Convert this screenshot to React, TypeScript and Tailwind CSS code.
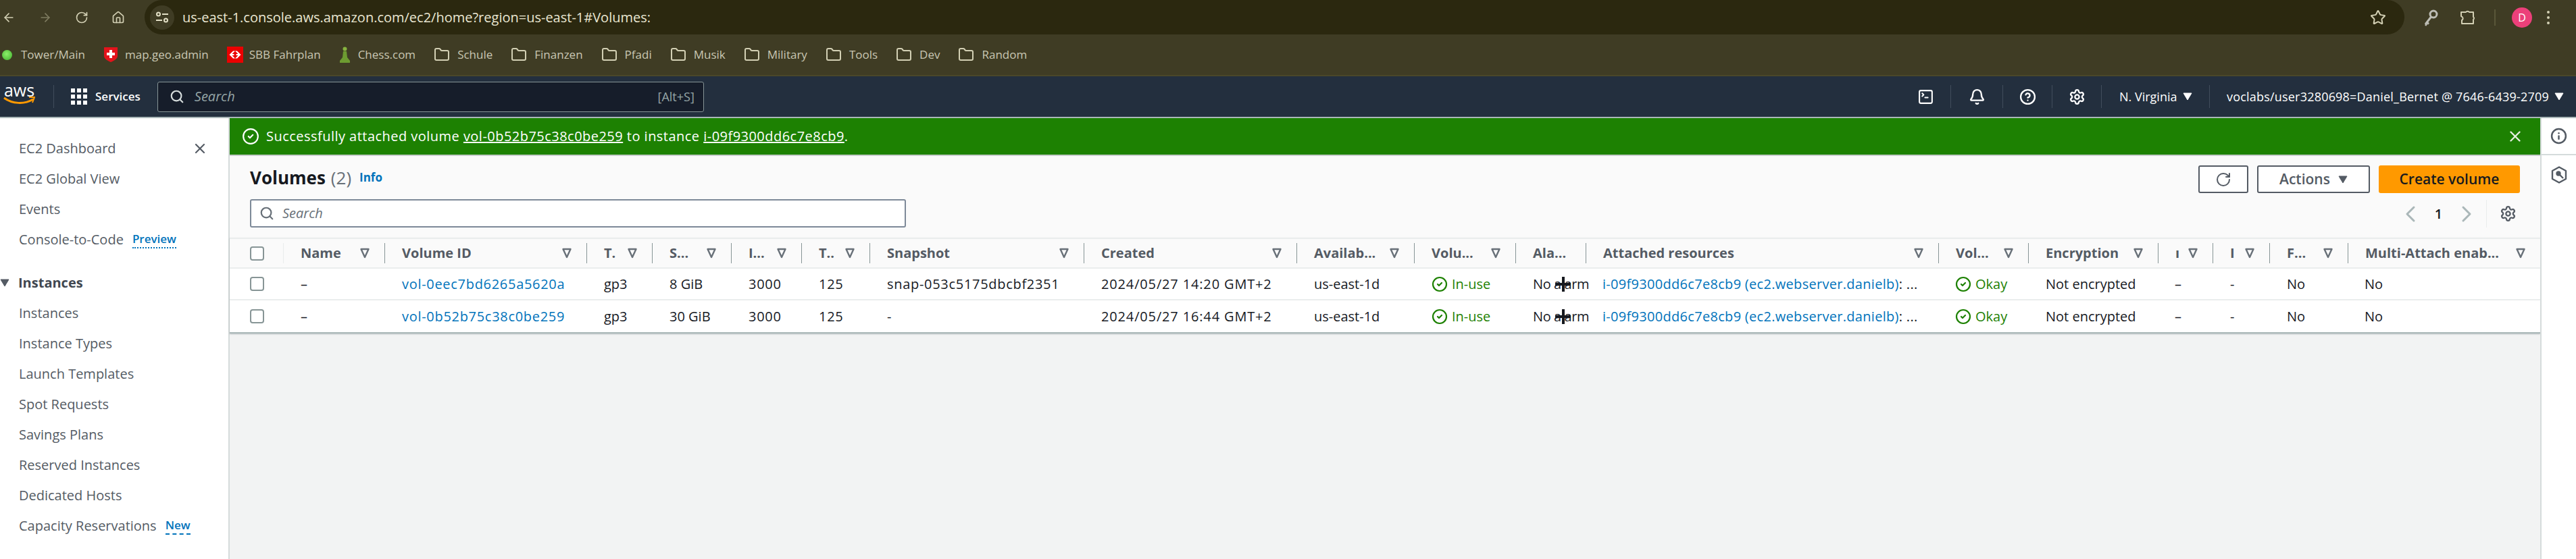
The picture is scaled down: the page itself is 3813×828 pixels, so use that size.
import {
  ArrowLeft,
  ArrowRight,
  Bell,
  ChevronLeft,
  ChevronRight,
  CircleCheck,
  CircleHelp,
  Folder,
  House,
  Info,
  RotateCw,
  Search,
  Settings,
  SquareTerminal,
  Star,
  X,
} from "lucide-react";

const columns = [
  { label: "Name", value: "Name" },
  { label: "Volume ID", value: "Volume ID" },
  { label: "T.", value: "T" },
  { label: "S...", value: "S" },
  { label: "I...", value: "I" },
  { label: "T..", value: "T2" },
  { label: "Snapshot", value: "Snapshot" },
  { label: "Created", value: "Created" },
  { label: "Availab...", value: "Availab" },
  { label: "Volu...", value: "Volu" },
  { label: "Ala...", value: "Ala", noFilter: true },
  { label: "Attached resources", value: "Attached" },
  { label: "Vol...", value: "Vol" },
  { label: "Encryption", value: "Encryption" },
  { label: "ı", value: "K" },
  { label: "I", value: "P" },
  { label: "F...", value: "F" },
  { label: "Multi-Attach enab...", value: "Multi" },
];

const rows = [
  { id: "vol-0eec7bd6265a5620a", size: "8 GiB", snapshot: "snap-053c5175dbcbf2351", created: "2024/05/27 14:20 GMT+2" },
  { id: "vol-0b52b75c38c0be259", size: "30 GiB", snapshot: "-", created: "2024/05/27 16:44 GMT+2" },
];

const bookmarkFolders = ["Schule", "Finanzen", "Pfadi", "Musik", "Military", "Tools", "Dev", "Random"];

const sideTop = ["EC2 Dashboard", "EC2 Global View", "Events"];
const sideInstances = [
  "Instances",
  "Instance Types",
  "Launch Templates",
  "Spot Requests",
  "Savings Plans",
  "Reserved Instances",
  "Dedicated Hosts",
];

function FilterCaret() {
  return (
    <svg width="14" height="16" viewBox="0 0 14 16" className="shrink-0 text-[#687078]">
      <path d="M1.5 2h11L7 14z" fill="none" stroke="currentColor" strokeWidth="2.4" strokeLinejoin="round" />
    </svg>
  );
}

function SolidCaret({ className }: { className: string }) {
  return (
    <svg width="14" height="12" viewBox="0 0 14 12" className={className}>
      <path d="M1 1h12L7 11z" fill="currentColor" stroke="currentColor" strokeLinejoin="round" />
    </svg>
  );
}

function Checkbox() {
  return <div className="h-[21px] w-[21px] rounded-[4px] border-2 border-[#879596] bg-white" />;
}

function StatusOk({ label }: { label: string }) {
  return (
    <span className="flex items-center gap-[6px] text-[#1d8102]">
      <CircleCheck className="h-[24px] w-[24px] shrink-0" strokeWidth={2.2} />
      {label}
    </span>
  );
}

function CursorCross() {
  return (
    <span className="absolute left-[58px] top-1/2 h-[22px] w-[23px] -translate-y-1/2">
      <span className="absolute left-0 top-[9px] h-[4px] w-[23px] bg-[#16191f]" />
      <span className="absolute left-[10px] top-0 h-[22px] w-[4px] bg-[#16191f]" />
    </span>
  );
}

function BrowserChrome() {
  return (
    <div className="h-[113px] shrink-0 border-b-2 border-[#4a4729] bg-[#3f3c24]">
      <div className="flex h-[51px] items-center">
        <div className="flex items-center gap-[34px] pl-[3px] text-[#d3d0b4]">
          <ArrowLeft className="h-[20px] w-[20px]" strokeWidth={2} />
          <ArrowRight className="h-[20px] w-[20px] text-[#7f7c60]" strokeWidth={2} />
          <RotateCw className="h-[20px] w-[20px]" strokeWidth={2} />
          <House className="h-[20px] w-[20px]" strokeWidth={2} />
        </div>
        <div className="ml-[29px] flex h-[51px] w-[3345px] items-center rounded-[26px] bg-[#2b280f] pl-[8px] pr-[27px]">
          <div className="flex h-[36px] w-[36px] items-center justify-center rounded-full bg-[#3f3c24]">
            <svg width="20" height="18" viewBox="0 0 20 18" fill="none" stroke="#e3e0c6" strokeWidth="2">
              <circle cx="4.5" cy="4" r="2.5" />
              <path d="M10 4h9M1 13h9" />
              <circle cx="15.5" cy="13" r="2.5" />
            </svg>
          </div>
          <span className="ml-[12px] text-[20px] text-[#e9e6d2]">us-east-1.console.aws.amazon.com/ec2/home?region=us-east-1#Volumes:</span>
          <Star className="ml-auto h-[24px] w-[24px] text-[#d3d0b4]" strokeWidth={2} />
        </div>
        <svg width="24" height="26" viewBox="0 0 24 26" fill="none" stroke="#bdbdb5" strokeWidth="3" className="ml-[27px]">
          <circle cx="16" cy="8" r="5" />
          <path d="M12.500 12 4 23M6 20l3 2.500M4 23l2 1.500" />
        </svg>
        <svg width="24" height="24" viewBox="0 0 24 24" fill="none" stroke="#d3d0b4" strokeWidth="2" strokeLinejoin="round" className="ml-[31px]">
          <path d="M2 4h7a3 3 0 0 1 5 0h6v7a2.500 2.500 0 0 1 0 4v6H3v-5a3 3 0 0 0 1-4.500 4 4 0 0 0-2-1.500z" />
        </svg>
        <div className="ml-[27px] h-[24px] w-[2px] bg-[#5a5739]" />
        <div className="ml-[24px] flex h-[30px] w-[30px] items-center justify-center rounded-full bg-[#ec407a] text-[16px] text-white">D</div>
        <div className="ml-[22px] flex flex-col gap-[4px]">
          <span className="h-[4px] w-[4px] rounded-full bg-[#d3d0b4]" />
          <span className="h-[4px] w-[4px] rounded-full bg-[#d3d0b4]" />
          <span className="h-[4px] w-[4px] rounded-full bg-[#d3d0b4]" />
        </div>
      </div>
      <div className="flex h-[60px] items-center gap-[27px] pl-[3px] text-[17px] text-[#c9c7b3]">
        <div className="flex items-center gap-[13px]">
          <span className="h-[15px] w-[15px] rounded-full bg-[radial-gradient(circle_at_45%_40%,#8cf06a,#3fae2a)]" />
          Tower/Main
        </div>
        <div className="flex items-center gap-[10px]">
          <svg width="22" height="24" viewBox="0 0 22 24">
            <path d="M1 1h20v13c0 4-5 7-10 9C6 21 1 18 1 14z" fill="#e3131b" />
            <path d="M9 5h4v4h4v4h-4v4H9v-4H5V9h4z" fill="#fff" />
          </svg>
          map.geo.admin
        </div>
        <div className="flex items-center gap-[9px]">
          <svg width="24" height="24" viewBox="0 0 24 24">
            <rect width="24" height="24" fill="#eb0000" />
            <path d="M9 6.500 3.500 12 9 17.500h3L7.500 13h3v-2h-3L12 6.500zM15 6.500 20.500 12 15 17.500h-3l4.500-4.500h-3v-2h3L12 6.500z" fill="#fff" />
          </svg>
          SBB Fahrplan
        </div>
        <div className="flex items-center gap-[11px]">
          <svg width="17" height="24" viewBox="0 0 17 24">
            <circle cx="8.500" cy="3.500" r="3" fill="#86b33f" />
            <path d="M6 7h5l1 9 4 5v3H1v-3l4-5z" fill="#6d9b31" />
          </svg>
          Chess.com
        </div>
        {bookmarkFolders.map((name) => (
          <div key={name} className="flex items-center gap-[11px]">
            <Folder className="h-[24px] w-[24px] text-[#d3d0b4]" strokeWidth={2} />
            {name}
          </div>
        ))}
      </div>
    </div>
  );
}

function ConsoleHeader() {
  return (
    <div className="flex h-[62px] shrink-0 items-center border-b-2 border-[#aab7b8] bg-[#232f3e] text-white">
      <div className="flex h-[34px] w-[80px] flex-col items-center border-r border-[#414d5c] pr-[22px] pt-0 leading-none">
        <span className="-mt-[6px] text-[25px] leading-[26px]">aws</span>
        <svg width="47" height="12" viewBox="0 0 47 12" className="-mt-[3px]" fill="none">
          <path d="M1 2c12 9 30 10 43 2" stroke="#ff9900" strokeWidth="3" />
          <path d="M38 1h8l-3 8" stroke="#ff9900" strokeWidth="2" />
        </svg>
      </div>
      <div className="ml-[25px] grid grid-cols-3 gap-[3px]">
        {Array.from({ length: 9 }).map((_, index) => (
          <span key={index} className="h-[6px] w-[6px] bg-white" />
        ))}
      </div>
      <span className="ml-[12px] text-[17px] font-semibold">Services</span>
      <div className="ml-[25px] flex h-[45px] w-[809px] items-center rounded-[3px] border border-[#879596] bg-[#161d2a] pl-[17px] pr-[13px]">
        <Search className="h-[22px] w-[22px] text-[#d5dbdb]" strokeWidth={2.4} />
        <span className="ml-[15px] text-[20px] italic text-[#95a5a6]">Search</span>
        <span className="ml-auto text-[18px] text-[#95a5a6]">[Alt+S]</span>
      </div>
      <div className="ml-auto flex items-center text-[18px]">
        <div className="flex h-[34px] w-[74px] items-center justify-center border-r border-[#414d5c]">
          <SquareTerminal className="h-[25px] w-[25px]" strokeWidth={2} />
        </div>
        <div className="flex h-[34px] w-[77px] items-center justify-center border-r border-[#414d5c]">
          <Bell className="h-[25px] w-[25px]" strokeWidth={2.2} />
        </div>
        <div className="flex h-[34px] w-[73px] items-center justify-center border-r border-[#414d5c]">
          <CircleHelp className="h-[25px] w-[25px]" strokeWidth={2.2} />
        </div>
        <div className="flex h-[34px] w-[73px] items-center justify-center border-r border-[#414d5c]">
          <Settings className="h-[25px] w-[25px]" strokeWidth={2.2} />
        </div>
        <div className="flex h-[34px] w-[160px] items-center gap-[8px] border-r border-[#414d5c] pl-[26px]">
          N. Virginia
          <SolidCaret className="text-white" />
        </div>
        <div className="flex h-[34px] w-[542px] items-center gap-[8px] whitespace-nowrap pl-[25px] tracking-[0.2px]">
          voclabs/user3280698=Daniel_Bernet @ 7646-6439-2709
          <SolidCaret className="text-white" />
        </div>
      </div>
    </div>
  );
}

function Sidebar() {
  return (
    <aside className="w-[340px] shrink-0 border-r-2 border-[#d5dbdb] bg-white pt-[22px] text-[20px] text-[#545b64]">
      <div className="relative">
        <X className="absolute left-[284px] top-[11px] h-[24px] w-[24px] text-[#545b64]" strokeWidth={2.2} />
        {sideTop.map((item) => (
          <div key={item} className="flex h-[45px] items-center pl-[28px]">
            {item}
          </div>
        ))}
        <div className="flex h-[45px] items-center pl-[28px]">
          Console-to-Code
          <span className="ml-[13px] border-b-2 border-dotted border-[#0073bb] text-[17px] font-semibold leading-[25px] text-[#0073bb]">Preview</span>
        </div>
      </div>
      <div className="mt-[19px] flex h-[45px] items-center gap-[13px] font-bold text-[#414750]">
        <SolidCaret className="text-[#545b64]" />
        Instances
      </div>
      {sideInstances.map((item) => (
        <div key={item} className="flex h-[45px] items-center pl-[28px]">
          {item}
        </div>
      ))}
      <div className="flex h-[45px] items-center pl-[28px]">
        Capacity Reservations
        <span className="ml-[13px] border-b-2 border-dashed border-[#0073bb] text-[17px] font-semibold leading-[25px] text-[#0073bb]">New</span>
      </div>
    </aside>
  );
}

function VolumesHeader() {
  return (
    <div className="flex justify-between bg-[#fafafa] pb-[15px] pl-[30px] pr-[30px] pt-[12px]">
      <div>
        <div className="flex h-[40px] items-center">
          <h1 className="text-[26px] font-bold text-[#16191f]">Volumes</h1>
          <span className="ml-[8px] text-[26px] text-[#687078]">(2)</span>
          <span className="ml-[12px] text-[17px] font-bold text-[#0073bb]">Info</span>
        </div>
        <div className="mt-[12px] flex h-[42px] w-[971px] items-center rounded-[3px] border-2 border-[#7d8998] bg-white pl-[12px]">
          <Search className="h-[22px] w-[22px] text-[#687078]" strokeWidth={2.4} />
          <span className="ml-[12px] text-[20px] italic text-[#687078]">Search</span>
        </div>
      </div>
      <div className="flex flex-col items-end">
        <div className="mt-[2px] flex h-[41px] items-stretch gap-[13px]">
          <div className="flex w-[74px] items-center justify-center rounded-[3px] border-2 border-[#545b64] bg-white text-[#545b64]">
            <RotateCw className="h-[24px] w-[24px]" strokeWidth={2} />
          </div>
          <div className="flex w-[167px] items-center justify-center gap-[12px] rounded-[3px] border-2 border-[#545b64] bg-white text-[21px] font-semibold text-[#545b64]">
            Actions
            <SolidCaret className="text-[#545b64]" />
          </div>
          <div className="flex w-[209px] items-center justify-center rounded-[3px] bg-[#ff9900] text-[21px] font-semibold text-[#16191f]">
            Create volume
          </div>
        </div>
        <div className="mt-[10px] flex h-[41px] items-center text-[20px] text-[#16191f]">
          <ChevronLeft className="h-[40px] w-[40px] text-[#aab7b8]" strokeWidth={1.8} />
          <span className="mx-[14px] w-[15px] text-center font-semibold">1</span>
          <ChevronRight className="h-[40px] w-[40px] text-[#aab7b8]" strokeWidth={1.8} />
          <div className="ml-[9px] flex h-[41px] w-[50px] items-center justify-end border-l border-[#eaeded] pr-[5px]">
            <Settings className="h-[25px] w-[25px] text-[#545b64]" strokeWidth={2.2} />
          </div>
        </div>
      </div>
    </div>
  );
}

function VolumesTable() {
  const grid =
    "grid grid-cols-[80px_150px_299px_97px_117px_104px_101px_317px_315px_174px_150px_104px_522px_133px_192px_81px_84px_116px_284px] items-center";

  return (
    <div className="border-b-2 border-[#aab7b8] bg-white text-[20px] text-[#16191f] shadow-[0_1px_2px_rgba(0,28,36,0.25)]">
      <div className={`${grid} h-[46px] border-y-2 border-[#eaeded] bg-[#fafafa]`}>
        <div className="flex h-[30px] items-center border-r border-[#eaeded] pl-[30px]">
          <Checkbox />
        </div>
        {columns.map((column, index) => (
          <div
            key={column.value}
            className={`flex h-[30px] items-center justify-between overflow-hidden pl-[25px] pr-[22px] font-bold text-[#545b64] ${
              index < columns.length - 1 ? "border-r border-[#879596]" : ""
            }`}
          >
            <span className="whitespace-nowrap">{column.label}</span>
            {column.noFilter ? null : <FilterCaret />}
          </div>
        ))}
      </div>
      {rows.map((row, index) => (
        <div key={row.id} className={`${grid} h-[47px] ${index === 0 ? "border-b-2 border-[#eaeded]" : ""}`}>
          <div className="pl-[30px]">
            <Checkbox />
          </div>
          <div className="pl-[25px]">–</div>
          <div className="pl-[25px] tracking-[0.7px] text-[#0073bb]">{row.id}</div>
          <div className="pl-[25px]">gp3</div>
          <div className="pl-[25px]">{row.size}</div>
          <div className="pl-[25px] tracking-[0.7px]">3000</div>
          <div className="pl-[25px] tracking-[0.7px]">125</div>
          <div className="pl-[25px] tracking-[0.7px]">{row.snapshot}</div>
          <div className="pl-[25px] tracking-[0.85px]">{row.created}</div>
          <div className="pl-[25px]">us-east-1d</div>
          <div className="pl-[25px]">
            <StatusOk label="In-use" />
          </div>
          <div className="relative whitespace-nowrap pl-[25px] tracking-[-0.4px]">
            No alarm
            <CursorCross />
          </div>
          <div className="whitespace-nowrap pl-[24px] tracking-[0.3px]">
            <span className="text-[#0073bb]">i-09f9300dd6c7e8cb9 (ec2.webserver.danielb)</span>: ...
          </div>
          <div className="pl-[24px]">
            <StatusOk label="Okay" />
          </div>
          <div className="pl-[25px]">Not encrypted</div>
          <div className="pl-[24px]">–</div>
          <div className="pl-[25px]">-</div>
          <div className="pl-[25px]">No</div>
          <div className="pl-[24px]">No</div>
        </div>
      ))}
    </div>
  );
}

function RightRail() {
  return (
    <aside className="w-[53px] shrink-0 border-l-2 border-[#d5dbdb] bg-white text-[#545b64]">
      <div className="flex h-[55px] items-center justify-center border-b-2 border-[#d5dbdb]">
        <Info className="h-[25px] w-[25px]" strokeWidth={2.4} />
      </div>
      <div className="flex h-[58px] items-center justify-center">
        <svg width="24" height="26" viewBox="0 0 24 26" fill="none" stroke="currentColor" strokeWidth="2.4">
          <path d="M12 1.500 22 7v12l-10 5.500L2 19V7z" strokeLinejoin="round" />
          <circle cx="11" cy="11" r="2.500" fill="currentColor" />
          <path d="m12 12 6 6" />
        </svg>
      </div>
    </aside>
  );
}

export default function App() {
  return (
    <div className="flex h-[828px] w-[3813px] flex-col overflow-hidden bg-white font-['Open_Sans',sans-serif]">
      <BrowserChrome />
      <ConsoleHeader />
      <div className="flex min-h-0 flex-1">
        <Sidebar />
        <main className="flex min-w-0 flex-1 flex-col bg-[#f2f3f3]">
          <div className="flex h-[54px] shrink-0 items-center bg-[#1d8102] pl-[18px] pr-[24px] text-[20px] tracking-[0.47px] text-white">
            <CircleCheck className="h-[26px] w-[26px]" strokeWidth={2} />
            <span className="ml-[10px]">
              Successfully attached volume <span className="underline">vol-0b52b75c38c0be259</span> to instance{" "}
              <span className="underline">i-09f9300dd6c7e8cb9</span>.
            </span>
            <X className="ml-auto h-[26px] w-[26px] text-[#e6efe1]" strokeWidth={2.2} />
          </div>
          <div className="h-[2px] shrink-0 bg-[#c6cccc]" />
          <VolumesHeader />
          <VolumesTable />
        </main>
        <RightRail />
      </div>
    </div>
  );
}
